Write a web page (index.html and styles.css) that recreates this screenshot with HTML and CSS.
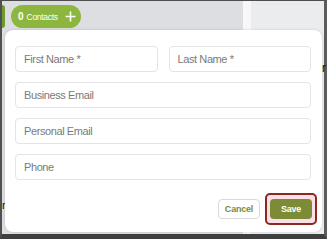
FILE: index.html
```html
<!DOCTYPE html>
<html>
<head>
<meta charset="utf-8">
<link rel="stylesheet" href="styles.css">
</head>
<body>
<div class="frame">
  <span class="peek peek-r">r</span>
  <span class="peek peek-n">n</span>
  <div class="topbar">
    <span class="pill-stub"></span>
    <span class="pill">
      <span class="pill-count">0</span>
      <span class="pill-label">Contacts</span>
      <svg class="pill-plus" width="11" height="11" viewBox="0 0 11 11"><path d="M5.5 0.5v10M0.5 5.5h10" stroke="#fff" stroke-width="1.6" fill="none"/></svg>
    </span>
  </div>
  <div class="modal">
    <div class="fields">
      <div class="field">First Name *</div>
      <div class="field">Last Name *</div>
      <div class="field wide">Business Email</div>
      <div class="field wide">Personal Email</div>
      <div class="field wide">Phone</div>
    </div>
    <div class="actions">
      <button class="btn-cancel">Cancel</button>
      <span class="focus-ring"><button class="btn-save">Save</button></span>
    </div>
  </div>
</div>
</body>
</html>
```

FILE: styles.css
```css
html, body {
  margin: 0;
  padding: 0;
}
body {
  width: 327px;
  height: 239px;
  overflow: hidden;
  font-family: "Liberation Sans", Arial, sans-serif;
  background: #444;
}
.frame {
  position: relative;
  box-sizing: border-box;
  width: 327px;
  height: 239px;
  border-top: 1px solid #4e4e4e;
  border-left: 2px solid #505050;
  border-right: 3px solid #5c5c5c;
  border-bottom: 5px solid #3f3f3f;
  background: linear-gradient(to right, #dcdee1 0 241px, #f7f7f8 241px 249px, #ebecee 249px);
}
.peek {
  position: absolute;
  font-size: 12px;
  color: #111;
  line-height: 1;
}
.peek-r { right: -2px; top: 61px; }
.peek-n { left: 0px; top: 199px; font-size: 11px; }
.topbar {
  display: flex;
  align-items: flex-start;
  height: 29px;
  box-sizing: border-box;
  padding-top: 4px;
}
.pill-stub {
  width: 3px;
  height: 23px;
  background: #6e9b31;
  border-radius: 0 12px 12px 0;
  margin-right: 6px;
}
.pill {
  display: flex;
  align-items: center;
  height: 23px;
  box-sizing: border-box;
  padding: 0 5px 0 7px;
  background: #8db63e;
  border-radius: 12px;
  color: #fff;
}
.pill-count {
  font-size: 10px;
  font-weight: bold;
  margin-right: 3px;
}
.pill-label {
  font-size: 8.5px;
  letter-spacing: -0.3px;
}
.pill-plus {
  margin-left: 7px;
}
.modal {
  position: relative;
  box-sizing: border-box;
  margin-left: 3px;
  width: 317px;
  height: 202px;
  background: #fff;
  border-radius: 8px;
  box-shadow: 0 0 3px rgba(0, 0, 0, 0.15);
  padding: 16px 11px 0 10px;
}
.fields {
  display: grid;
  grid-template-columns: 1fr 1fr;
  column-gap: 11px;
  row-gap: 10px;
}
.field {
  box-sizing: border-box;
  height: 26px;
  border: 1px solid #e4e4e4;
  border-radius: 4px;
  padding-left: 8px;
  display: flex;
  align-items: center;
  font-size: 11px;
  letter-spacing: -0.4px;
  color: #7a7a7a;
}
.field.wide {
  grid-column: 1 / 3;
}
.actions {
  display: flex;
  justify-content: flex-end;
  align-items: center;
  gap: 5px;
  margin-top: 13px;
  margin-right: -6px;
}
button {
  font-family: "Liberation Sans", Arial, sans-serif;
  font-weight: bold;
  font-size: 9px;
  letter-spacing: -0.2px;
  box-sizing: border-box;
  height: 20px;
  border-radius: 4px;
  padding: 0;
  margin: 0;
  cursor: pointer;
}
.btn-cancel {
  width: 42px;
  background: #fff;
  border: 1px solid #dadada;
  color: #7b8c3d;
}
.focus-ring {
  display: flex;
  padding: 4px 3px;
  border: 2px solid #8a2a1f;
  border-radius: 5px;
  background: #fbdfe8;
}
.btn-save {
  width: 42px;
  background: #7b8b36;
  border: none;
  color: #fff;
}
```
